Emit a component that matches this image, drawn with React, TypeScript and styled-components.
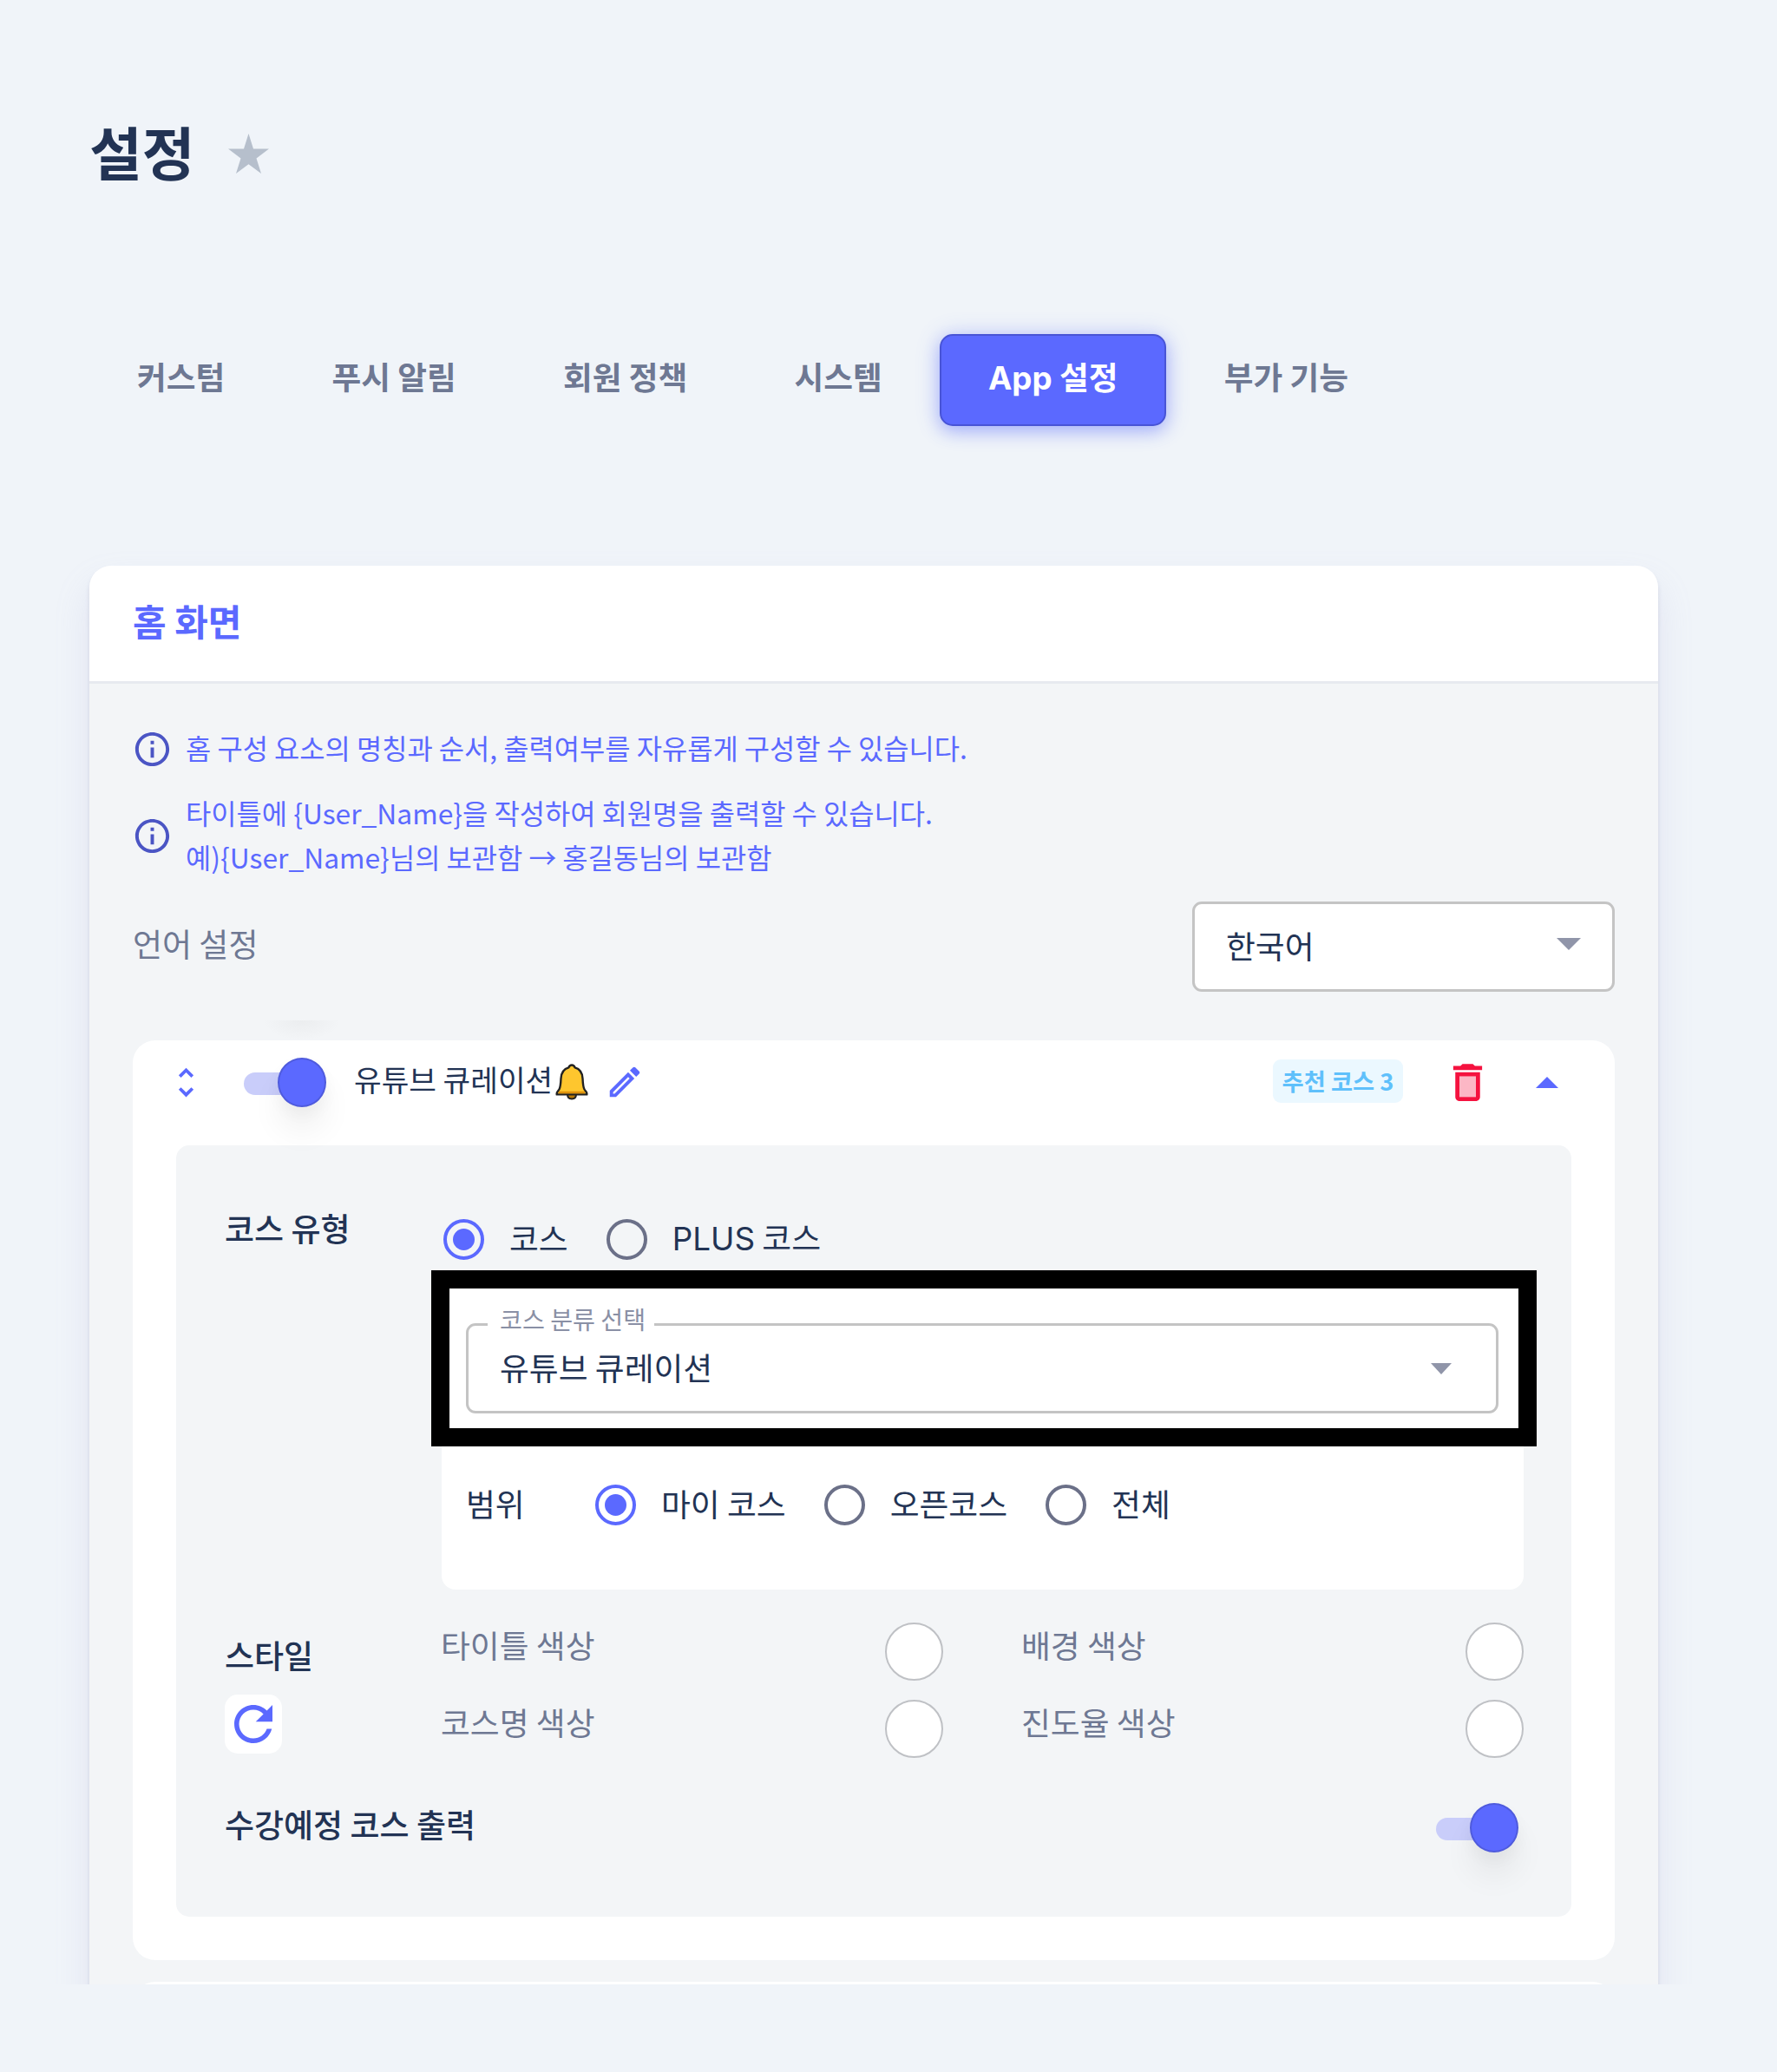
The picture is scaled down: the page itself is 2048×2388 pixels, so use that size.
import React from "react";
import styled, { createGlobalStyle, css } from "styled-components";

const color = {
  page: "#f0f4f9",
  primary: "#5b69ff",
  ink: "#223354",
  muted: "#6e7893",
  surface: "#f3f5f7",
  line: "#c4c4c4",
};

const GlobalStyle = createGlobalStyle`
  *, *::before, *::after { box-sizing: border-box; }
  body {
    margin: 0;
    background: ${color.page};
    color: ${color.ink};
    font-family: "Noto Sans CJK KR", "Noto Sans", sans-serif;
  }
  svg { display: block; flex: none; }
  h1, h2, p { margin: 0; }
`;

const Page = styled.div`
  width: 2048px;
  height: 2388px;
`;

const Screen = styled.main`
  height: 2287px;
  overflow: hidden;
  padding: 133px 137px 0 103px;
`;

const TitleBar = styled.header`
  display: flex;
  align-items: center;
  gap: 39px;
  height: 88px;
`;

const Title = styled.h1`
  padding-bottom: 8px;
  font-size: 66px;
  line-height: 80px;
  font-weight: 700;
`;

const Latin = styled.b`
  font-family: Inter, "Noto Sans CJK KR", sans-serif;
  font-weight: inherit;
`;

const TabList = styled.nav`
  display: flex;
  gap: 9.2px;
  height: 106px;
  margin: 164px 0 0 -2px;
`;

const Tab = styled.button<{ $active?: boolean }>`
  display: flex;
  align-items: center;
  height: 106px;
  padding: 0 55px 10px;
  border: 2px solid transparent;
  border-radius: 15px;
  background: none;
  color: ${color.muted};
  font: inherit;
  font-size: 36.7px;
  font-weight: 700;
  white-space: pre;
  ${(p) =>
    p.$active &&
    css`
      padding: 0 54px 10px;
      border-color: #4854d6;
      background: ${color.primary};
      color: #fff;
      box-shadow: 0 2px 27px rgba(85, 105, 255, 0.3), 0 7px 18px rgba(85, 105, 255, 0.3);
    `}
`;

const Card = styled.section`
  height: 1700px;
  margin-top: 161px;
  border-radius: 25px;
  background: ${color.surface};
  box-shadow: 0 22px 40px rgba(159, 162, 210, 0.18), 0 5px 5px rgba(159, 162, 191, 0.32);
`;

const CardHeader = styled.div`
  display: flex;
  align-items: center;
  height: 136px;
  padding: 0 50px 8px;
  border-bottom: 3px solid #e7eaef;
  border-radius: 25px 25px 0 0;
  background: #fff;
`;

const CardTitle = styled.h2`
  color: ${color.primary};
  font-size: 42px;
  line-height: 60px;
  font-weight: 700;
`;

const CardBody = styled.div`
  padding: 48px 50px 0;
`;

const Notice = styled.div`
  display: flex;
  align-items: center;
  gap: 15px;
  margin: 0 0 24px -1px;
  color: ${color.primary};
  font-size: 31.8px;
  line-height: 50.5px;

  svg {
    margin-top: 4px;
    color: #4b55c4;
  }
`;

const LanguageRow = styled.div`
  display: flex;
  align-items: center;
  justify-content: space-between;
  height: 104px;
  margin-top: 27px;
`;

const LanguageLabel = styled.span`
  padding-bottom: 9px;
  color: ${color.muted};
  font-size: 37px;
`;

const Select = styled.div<{ $width?: number; $caretInset?: number; $caretLift?: number }>`
  position: relative;
  display: flex;
  align-items: center;
  justify-content: space-between;
  width: ${(p) => (p.$width ? `${p.$width}px` : "100%")};
  height: 104px;
  padding: 0 ${(p) => p.$caretInset ?? 36}px 0 36px;
  border: 3px solid ${color.line};
  border-radius: 11px;
  background: #fff;
  font-size: 36.8px;

  svg {
    margin-bottom: ${(p) => p.$caretLift ?? 0}px;
  }
`;

const SelectValue = styled.span`
  padding-bottom: 4px;
  line-height: 54px;
`;

const FloatingLabel = styled.span`
  position: absolute;
  top: -31px;
  left: 22px;
  width: 192px;
  padding-left: 14px;
  background: #fff;
  color: #8a90a5;
  font-size: 28.2px;
  line-height: 46px;
  white-space: nowrap;
`;

const Item = styled.article<{ $shade?: boolean }>`
  position: relative;
  height: 1060px;
  margin-top: 56px;
  border-radius: 26px;
  background: #fff;

  ${(p) =>
    p.$shade &&
    css`
      &::before {
        content: "";
        position: absolute;
        top: -23px;
        left: 150px;
        width: 90px;
        height: 23px;
        background: radial-gradient(ellipse at 50% 0, rgba(60, 60, 60, 0.045), transparent 70%);
      }
    `}
`;

const NextItem = styled(Item)`
  height: 200px;
  margin-top: 25px;
`;

const ItemHeader = styled.div`
  display: flex;
  align-items: center;
  height: 121px;
  padding: 0 65px 25px 39px;
`;

const ItemTitle = styled.span`
  margin: 0 3px 0 32px;
  padding-bottom: 8px;
  font-size: 34.4px;
  white-space: nowrap;
`;

const Spacer = styled.div`
  flex: 1;
`;

const Chip = styled.span`
  width: 150px;
  height: 50px;
  margin: -3px 46px 0 0;
  border-radius: 9px;
  background: #ebf8ff;
  color: #5fc0fb;
  font-size: 27.3px;
  line-height: 48px;
  font-weight: 700;
  text-align: center;
  white-space: nowrap;
`;

const SwitchRoot = styled.span`
  position: relative;
  display: flex;
  align-items: center;
  width: 95px;
  height: 57px;
`;

const SwitchTrack = styled.span`
  width: 72px;
  height: 26px;
  margin-top: 3px;
  border-radius: 13px;
  background: #c9cdfa;
`;

const SwitchThumb = styled.span`
  position: absolute;
  top: 0;
  right: 0;
  width: 56px;
  height: 57px;
  border: 2px solid #4f5bdd;
  border-radius: 50%;
  background: ${color.primary};
  box-shadow: 0 28px 36px rgba(0, 0, 0, 0.06), 0 8px 18px rgba(0, 0, 0, 0.04);
`;

const Panel = styled.div`
  height: 889px;
  margin: 0 50px;
  padding: 68px 55px 0 56px;
  border-radius: 15px;
  background: ${color.surface};
`;

const FormRow = styled.div<{ $top?: number }>`
  display: grid;
  grid-template-columns: 250px 1fr;
  margin-top: ${(p) => p.$top ?? 0}px;
`;

const FieldName = styled.div<{ $top?: number }>`
  margin-top: ${(p) => p.$top ?? 0}px;
  font-size: 37px;
  line-height: 54px;
  font-weight: 500;
`;

const TypeContent = styled.div`
  padding-top: 13px;
`;

const RadioRow = styled.div<{ $top?: number; $inset?: number }>`
  display: flex;
  align-items: center;
  height: 54px;
  margin-top: ${(p) => p.$top ?? 0}px;
  padding-left: ${(p) => p.$inset ?? 0}px;
`;

const RadioLabel = styled.label`
  display: flex;
  align-items: center;
  gap: 29px;
  margin-right: 44px;
  font-size: 36.8px;
  line-height: 50px;
  white-space: nowrap;

  span {
    padding-bottom: 4px;
  }
`;

const RadioMark = styled.i<{ $on?: boolean }>`
  display: grid;
  place-items: center;
  width: 47px;
  height: 47px;
  border: 4px solid ${(p) => (p.$on ? color.primary : "#6b7088")};
  border-radius: 50%;

  &::after {
    content: "";
    width: 25px;
    height: 25px;
    border-radius: 50%;
    background: ${(p) => (p.$on ? color.primary : "transparent")};
  }
`;

const CategoryBox = styled.div`
  position: relative;
  height: 367px;
  margin-top: 10px;
  padding: 60px 29px 0 28px;
  border-radius: 16px;
  background: #fff;
`;

const Highlight = styled.div`
  position: absolute;
  top: -1px;
  left: -12px;
  width: 1274px;
  height: 203px;
  border: 21px solid #000;
`;

const ScopeName = styled.span`
  width: 149px;
  padding-bottom: 4px;
  font-size: 36.8px;
`;

const ResetButton = styled.button`
  display: grid;
  place-items: center;
  width: 66px;
  height: 68px;
  margin: 19px 0 0;
  padding: 0;
  border: 0;
  border-radius: 15px;
  background: #fff;
  color: ${color.primary};
`;

const ColorGrid = styled.div`
  display: grid;
  grid-template-columns: 1fr 1fr;
  gap: 22px 90px;
  margin-left: -1px;
`;

const ColorField = styled.div`
  display: flex;
  align-items: center;
  justify-content: space-between;
  height: 67px;
  color: ${color.muted};
  font-size: 36.8px;

  span {
    padding-bottom: 17px;
  }
`;

const Swatch = styled.i`
  width: 67px;
  height: 67px;
  border: 2px solid #bfc1c5;
  border-radius: 50%;
  background: #fff;
`;

const OutputRow = styled.div`
  display: flex;
  align-items: center;
  justify-content: space-between;
  height: 62px;
  margin-top: 49px;
  padding-right: 6px;
`;

const OutputName = styled(FieldName)`
  padding-bottom: 8px;
`;

const ReorderWrap = styled.span`
  margin-right: 44px;
  color: ${color.primary};
`;

const EditWrap = styled.span`
  margin-left: 19px;
  color: ${color.primary};
`;

const DeleteWrap = styled.span`
  margin-right: 50px;
  color: #f5123f;
`;

function Glyph({ size, d, children }: { size: number; d?: string; children?: React.ReactNode }) {
  return (
    <svg width={size} height={size} viewBox="0 0 24 24" fill="currentColor" aria-hidden="true">
      {d && <path d={d} />}
      {children}
    </svg>
  );
}

const StarIcon = () => (
  <svg width="47" height="46" viewBox="0 0 47 46" fill="#b6bfcc">
    <path d="M23.5 0 29 17.500H47L32.500 28.500 38 46 23.500 35.300 9 46l5.500-17.500L0 17.500h18z" />
  </svg>
);

const InfoIcon = () => (
  <Glyph
    size={47}
    d="M11 7h2v2h-2zm0 4h2v6h-2zm1-9C6.480 2 2 6.480 2 12s4.480 10 10 10 10-4.480 10-10S17.520 2 12 2zm0 18c-4.410 0-8-3.590-8-8s3.590-8 8-8 8 3.590 8 8-3.590 8-8 8z"
  />
);

const BellIcon = () => (
  <svg width="38" height="42" viewBox="0 0 38 42">
    <path d="M14 35h10c0 3.500-2 5.500-5 5.500s-5-2-5-5.500z" fill="#b97a06" stroke="#222" strokeWidth="2" />
    <path
      d="M19 1.500c-2 0-3 1.200-3.600 2.900C9.800 6 6.800 10.500 6.500 17c-.3 6.500-.6 10-2 12.500-1 1.700-2.800 2.800-2.800 4.500v1.400h34.600V34c0-1.700-1.800-2.800-2.800-4.500-1.400-2.500-1.700-6-2-12.500-.3-6.500-3.300-11-8.900-12.600C22 2.700 21 1.500 19 1.500z"
      fill="#fec62e"
      stroke="#222"
      strokeWidth="2.400"
      strokeLinejoin="round"
    />
    <path d="M4 33h30" stroke="#e0930c" strokeWidth="2.500" />
  </svg>
);

const Caret = ({ up, w, h, fill }: { up?: boolean; w: number; h: number; fill: string }) => (
  <svg width={w} height={h} viewBox="0 0 28 14" preserveAspectRatio="none" fill={fill}>
    <path d={up ? "M0 14 14 0l14 14z" : "M0 0l14 14L28 0z"} />
  </svg>
);

const Switch = () => (
  <SwitchRoot role="switch" aria-checked="true">
    <SwitchTrack />
    <SwitchThumb />
  </SwitchRoot>
);

const Radio = ({ on, children }: { on?: boolean; children: React.ReactNode }) => (
  <RadioLabel>
    <RadioMark $on={on} />
    <span>{children}</span>
  </RadioLabel>
);

const tabs: { name: React.ReactNode; active?: boolean }[] = [
  { name: "커스텀" },
  { name: "푸시 알림" },
  { name: "회원 정책" },
  { name: "시스템" },
  {
    name: (
      <span>
        <Latin>App</Latin> 설정
      </span>
    ),
    active: true,
  },
  { name: "부가 기능" },
];

const colorNames = ["타이틀 색상", "배경 색상", "코스명 색상", "진도율 색상"];

export default function App() {
  return (
    <Page>
      <GlobalStyle />
      <Screen>
        <TitleBar>
          <Title>설정</Title>
          <StarIcon />
        </TitleBar>

        <TabList>
          {tabs.map((tab, i) => (
            <Tab key={i} $active={tab.active}>
              {tab.name}
            </Tab>
          ))}
        </TabList>

        <Card>
          <CardHeader>
            <CardTitle>홈 화면</CardTitle>
          </CardHeader>
          <CardBody>
            <Notice>
              <InfoIcon />
              <p>홈 구성 요소의 명칭과 순서, 출력여부를 자유롭게 구성할 수 있습니다.</p>
            </Notice>
            <Notice>
              <InfoIcon />
              <p>
                타이틀에 {"{User_Name}"}을 작성하여 회원명을 출력할 수 있습니다.
                <br />
                예){"{User_Name}"}님의 보관함 → 홍길동님의 보관함
              </p>
            </Notice>

            <LanguageRow>
              <LanguageLabel>언어 설정</LanguageLabel>
              <Select $width={487} $caretLift={7}>
                <SelectValue>한국어</SelectValue>
                <Caret w={28} h={14} fill="#9095a9" />
              </Select>
            </LanguageRow>

            <Item $shade>
              <ItemHeader>
                <ReorderWrap>
                  <Glyph
                    size={45}
                    d="M12 5.830 15.170 9l1.410-1.410L12 3 7.410 7.590 8.830 9 12 5.830zm0 12.340L8.830 15l-1.410 1.410L12 21l4.590-4.590L15.170 15 12 18.170z"
                  />
                </ReorderWrap>
                <Switch />
                <ItemTitle>유튜브 큐레이션</ItemTitle>
                <BellIcon />
                <EditWrap>
                  <Glyph
                    size={46}
                    d="m14.060 9.020.92.92L5.920 19H5v-.92l9.060-9.060M17.660 3c-.25 0-.51.1-.7.290l-1.830 1.830 3.750 3.750 1.830-1.830c.39-.39.39-1.020 0-1.410l-2.340-2.340c-.2-.2-.45-.29-.71-.29zm-3.600 3.190L3 17.250V21h3.750L17.810 9.940l-3.750-3.750z"
                  />
                </EditWrap>
                <Spacer />
                <Chip>추천 코스 3</Chip>
                <DeleteWrap>
                  <Glyph size={57}>
                    <path d="M8 9h8v10H8z" opacity=".3" />
                    <path d="M15.500 4l-1-1h-5l-1 1H5v2h14V4zM6 19c0 1.100.9 2 2 2h8c1.100 0 2-.9 2-2V7H6v12zM8 9h8v10H8V9z" />
                  </Glyph>
                </DeleteWrap>
                <Caret up w={26} h={13} fill={color.primary} />
              </ItemHeader>

              <Panel>
                <FormRow>
                  <FieldName>코스 유형</FieldName>
                  <TypeContent>
                    <RadioRow $inset={2}>
                      <Radio on>코스</Radio>
                      <Radio>
                        <Latin>PLUS</Latin> 코스
                      </Radio>
                    </RadioRow>
                    <CategoryBox>
                      <Select $caretInset={51}>
                        <FloatingLabel>코스 분류 선택</FloatingLabel>
                        <SelectValue>유튜브 큐레이션</SelectValue>
                        <Caret w={24} h={13} fill="#9095a9" />
                      </Select>
                      <RadioRow $top={78}>
                        <ScopeName>범위</ScopeName>
                        <Radio on>마이 코스</Radio>
                        <Radio>오픈코스</Radio>
                        <Radio>전체</Radio>
                      </RadioRow>
                      <Highlight />
                    </CategoryBox>
                  </TypeContent>
                </FormRow>

                <FormRow $top={38}>
                  <div>
                    <FieldName $top={10}>스타일</FieldName>
                    <ResetButton aria-label="reset">
                      <Glyph
                        size={66}
                        d="M17.650 6.350C16.200 4.900 14.210 4 12 4c-4.420 0-7.990 3.580-7.990 8s3.570 8 7.990 8c3.730 0 6.840-2.550 7.730-6h-2.080c-.82 2.330-3.040 4-5.650 4-3.310 0-6-2.690-6-6s2.690-6 6-6c1.660 0 3.140.69 4.220 1.780L13 11h7V4l-2.350 2.350z"
                      />
                    </ResetButton>
                  </div>
                  <ColorGrid>
                    {colorNames.map((name) => (
                      <ColorField key={name}>
                        <span>{name}</span>
                        <Swatch />
                      </ColorField>
                    ))}
                  </ColorGrid>
                </FormRow>

                <OutputRow>
                  <OutputName>수강예정 코스 출력</OutputName>
                  <Switch />
                </OutputRow>
              </Panel>
            </Item>
            <NextItem />
          </CardBody>
        </Card>
      </Screen>
    </Page>
  );
}
